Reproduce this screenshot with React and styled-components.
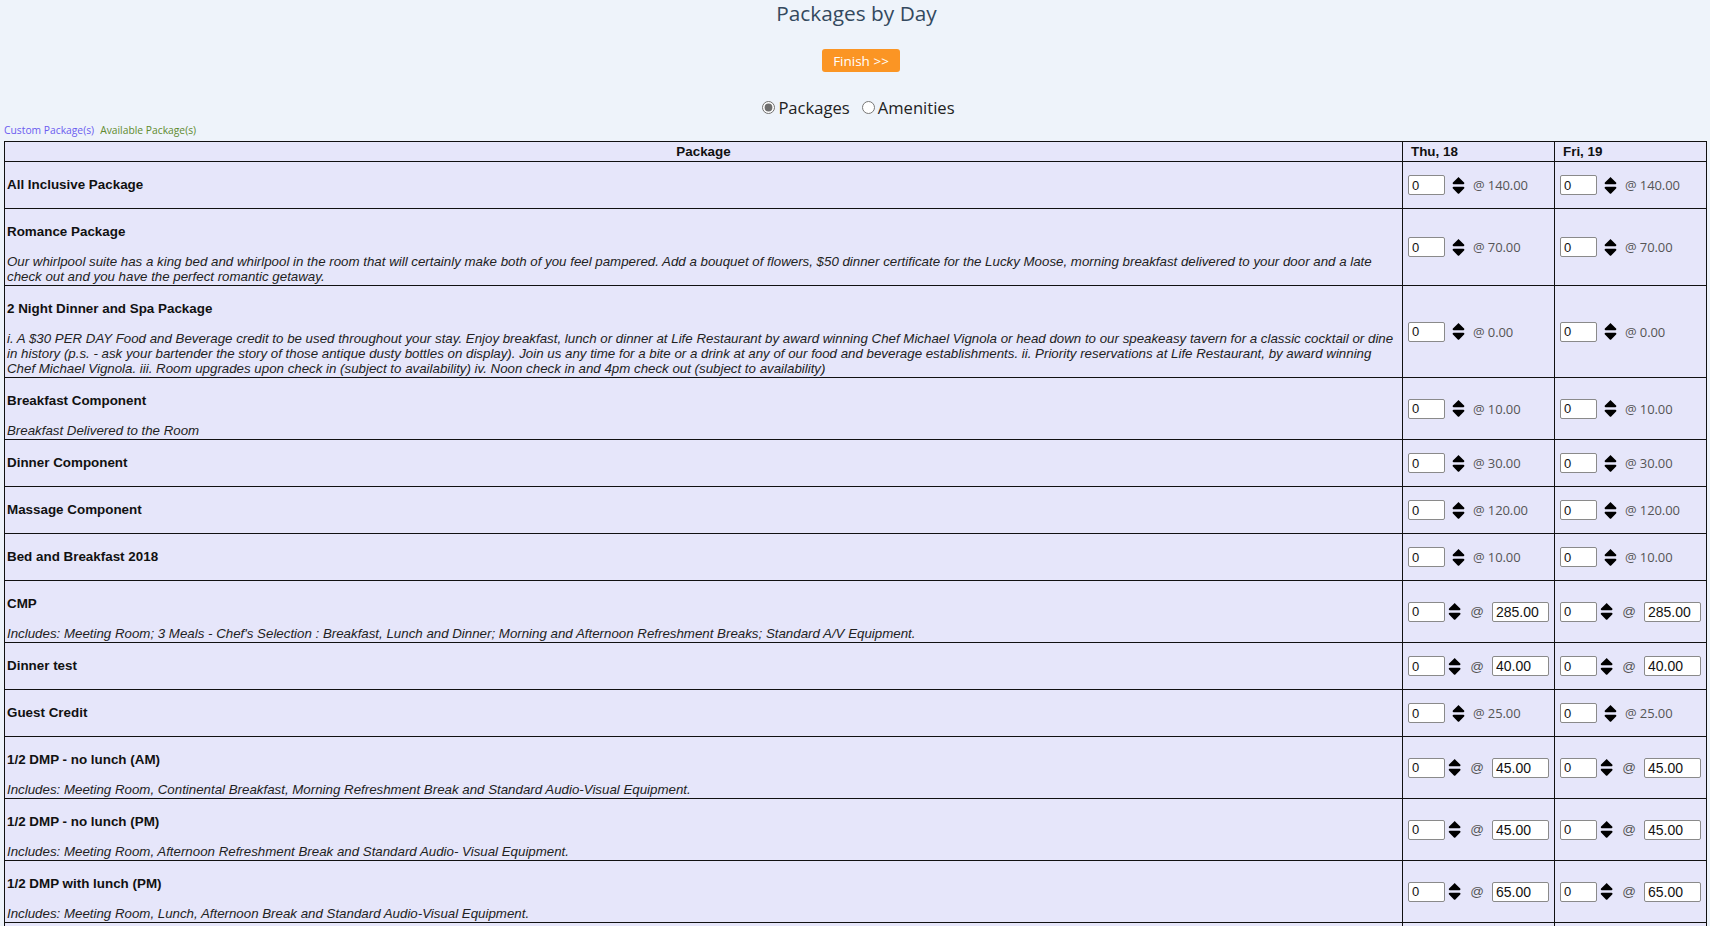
import React, { useState } from 'react';
import styled, { createGlobalStyle } from 'styled-components';
import { FaSort } from 'react-icons/fa';

const GlobalStyle = createGlobalStyle`
  html, body {
    margin: 0;
    padding: 0;
    background: #eef3fa;
    font-family: Arial, "Liberation Sans", sans-serif;
  }
`;

const Page = styled.div`
  padding: 0 3px 0 4px;
`;

const Title = styled.h2`
  margin: 0;
  padding-left: 2px;
  text-align: center;
  font-family: "Open Sans", sans-serif;
  font-weight: 400;
  font-size: 20.8px;
  line-height: 26px;
  color: #34495e;
`;

const ButtonRow = styled.div`
  display: flex;
  justify-content: center;
  margin-top: 23px;
  padding-left: 11px;
`;

const FinishButton = styled.button`
  height: 23px;
  padding: 0 11px;
  border: none;
  border-radius: 3px;
  background: #fb9524;
  color: #fff;
  font-family: "Open Sans", sans-serif;
  font-weight: 500;
  font-size: 13.5px;
  cursor: pointer;
`;

const RadioRow = styled.div`
  display: flex;
  justify-content: center;
  align-items: center;
  gap: 12px;
  margin-top: 25px;
  padding-left: 6px;
  height: 20px;
  font-family: "Open Sans", sans-serif;
  font-size: 16.6px;
  color: #222;
`;

const RadioLabel = styled.label`
  display: flex;
  align-items: center;
  cursor: pointer;

  input {
    margin: 0 3px 0 0;
    width: 13px;
    height: 13px;
    accent-color: #6e6e6e;
  }
`;

const LinkRow = styled.div`
  display: flex;
  gap: 6px;
  margin-top: 6px;
  height: 14px;
  align-items: center;
  font-family: "Open Sans", sans-serif;
  font-size: 10.3px;
`;

const Link = styled.a`
  color: ${(p) => p.$color};
  text-decoration: none;
  cursor: pointer;
`;

const Table = styled.table`
  width: 100%;
  table-layout: fixed;
  border-collapse: collapse;
  background: #e6e6fa;
  margin-top: 4px;
  color: #111;
`;

const Col = styled.col`
  width: ${(p) => (p.$w ? `${p.$w}px` : 'auto')};
`;

const HeadCell = styled.th`
  border: 1px solid #111;
  height: 19px;
  padding: 0 8px;
  font-size: 13.4px;
  font-weight: bold;
  text-align: ${(p) => (p.$left ? 'left' : 'center')};
`;

const PackageCell = styled.td`
  border: 1px solid #111;
  padding: 0 2px 1px 2px;
  vertical-align: middle;
`;

const PackageName = styled.div`
  font-weight: bold;
  font-size: 13.4px;
  line-height: 15px;
  margin: 15px 0;
`;

const Description = styled.div`
  font-style: italic;
  font-size: 13.3px;
  line-height: 15px;
  color: #222;
`;

const DayCell = styled.td`
  border: 1px solid #111;
  padding: 0 5px;
  vertical-align: middle;
`;

const Qty = styled.div`
  display: flex;
  align-items: center;
`;

const NumBox = styled.input`
  box-sizing: border-box;
  width: ${(p) => p.$w}px;
  height: 20px;
  padding: 0 3px;
  border: 1px solid #8a8a8a;
  border-radius: 2px;
  background: #fff;
  font-family: Arial, "Liberation Sans", sans-serif;
  font-size: ${(p) => (p.$big ? 14 : 13)}px;
  color: #111;
  outline: none;
`;

const SortIcon = styled(FaSort)`
  margin: 0 4px 0 3px;
  color: #000;
`;

const Price = styled.span`
  font-family: "Open Sans", sans-serif;
  font-size: 13px;
  color: #555;
  letter-spacing: -0.1px;
`;

const At = styled.span`
  font-family: Arial, "Liberation Sans", sans-serif;
  font-size: 13.5px;
  color: #555;
  margin: 0 8px 0 5px;
`;

const packages = [
  { name: 'All Inclusive Package', price: '140.00' },
  {
    name: 'Romance Package',
    desc: 'Our whirlpool suite has a king bed and whirlpool in the room that will certainly make both of you feel pampered. Add a bouquet of flowers, $50 dinner certificate for the Lucky Moose, morning breakfast delivered to your door and a late check out and you have the perfect romantic getaway.',
    price: '70.00',
  },
  {
    name: '2 Night Dinner and Spa Package',
    desc: 'i. A $30 PER DAY Food and Beverage credit to be used throughout your stay. Enjoy breakfast, lunch or dinner at Life Restaurant by award winning Chef Michael Vignola or head down to our speakeasy tavern for a classic cocktail or dine in history (p.s. - ask your bartender the story of those antique dusty bottles on display). Join us any time for a bite or a drink at any of our food and beverage establishments. ii. Priority reservations at Life Restaurant, by award winning Chef Michael Vignola. iii. Room upgrades upon check in (subject to availability) iv. Noon check in and 4pm check out (subject to availability)',
    price: '0.00',
  },
  { name: 'Breakfast Component', desc: 'Breakfast Delivered to the Room', price: '10.00' },
  { name: 'Dinner Component', price: '30.00' },
  { name: 'Massage Component', price: '120.00' },
  { name: 'Bed and Breakfast 2018', price: '10.00' },
  {
    name: 'CMP',
    desc: "Includes: Meeting Room; 3 Meals - Chef's Selection : Breakfast, Lunch and Dinner; Morning and Afternoon Refreshment Breaks; Standard A/V Equipment.",
    price: '285.00',
    editable: true,
  },
  { name: 'Dinner test', price: '40.00', editable: true },
  { name: 'Guest Credit', price: '25.00' },
  {
    name: '1/2 DMP - no lunch (AM)',
    desc: 'Includes: Meeting Room, Continental Breakfast, Morning Refreshment Break and Standard Audio-Visual Equipment.',
    price: '45.00',
    editable: true,
  },
  {
    name: '1/2 DMP - no lunch (PM)',
    desc: 'Includes: Meeting Room, Afternoon Refreshment Break and Standard Audio- Visual Equipment.',
    price: '45.00',
    editable: true,
  },
  {
    name: '1/2 DMP with lunch (PM)',
    desc: 'Includes: Meeting Room, Lunch, Afternoon Break and Standard Audio-Visual Equipment.',
    price: '65.00',
    editable: true,
  },
  {
    name: '1/2 DMP with lunch (AM)',
    desc: 'Includes: Meeting Room, Continental Breakfast, Lunch, Morning Break and Standard Audio-Visual Equipment.',
    price: '65.00',
    editable: true,
  },
];

const days = ['Thu, 18', 'Fri, 19'];

function DayInput({ pkg }) {
  return (
    <Qty>
      <NumBox $w={37} defaultValue="0" />
      <SortIcon size={21} />
      {pkg.editable ? (
        <>
          <At>@</At>
          <NumBox $w={57} $big defaultValue={pkg.price} />
        </>
      ) : (
        <Price>@ {pkg.price}</Price>
      )}
    </Qty>
  );
}

function App() {
  const [mode, setMode] = useState('packages');

  return (
    <Page>
      <GlobalStyle />
      <Title>Packages by Day</Title>
      <ButtonRow>
        <FinishButton>Finish &gt;&gt;</FinishButton>
      </ButtonRow>
      <RadioRow>
        <RadioLabel>
          <input type="radio" checked={mode === 'packages'} onChange={() => setMode('packages')} />
          Packages
        </RadioLabel>
        <RadioLabel>
          <input type="radio" checked={mode === 'amenities'} onChange={() => setMode('amenities')} />
          Amenities
        </RadioLabel>
      </RadioRow>
      <LinkRow>
        <Link $color="#6b5cf0">Custom Package(s)</Link>
        <Link $color="#5e8a2e">Available Package(s)</Link>
      </LinkRow>
      <Table>
        <colgroup>
          <Col />
          {days.map((d) => (
            <Col key={d} $w={152} />
          ))}
        </colgroup>
        <thead>
          <tr>
            <HeadCell>Package</HeadCell>
            {days.map((d) => (
              <HeadCell key={d} $left>{d}</HeadCell>
            ))}
          </tr>
        </thead>
        <tbody>
          {packages.map((pkg) => (
            <tr key={pkg.name}>
              <PackageCell>
                <PackageName>{pkg.name}</PackageName>
                {pkg.desc && <Description>{pkg.desc}</Description>}
              </PackageCell>
              {days.map((d) => (
                <DayCell key={d}>
                  <DayInput pkg={pkg} />
                </DayCell>
              ))}
            </tr>
          ))}
        </tbody>
      </Table>
    </Page>
  );
}

export default App;
